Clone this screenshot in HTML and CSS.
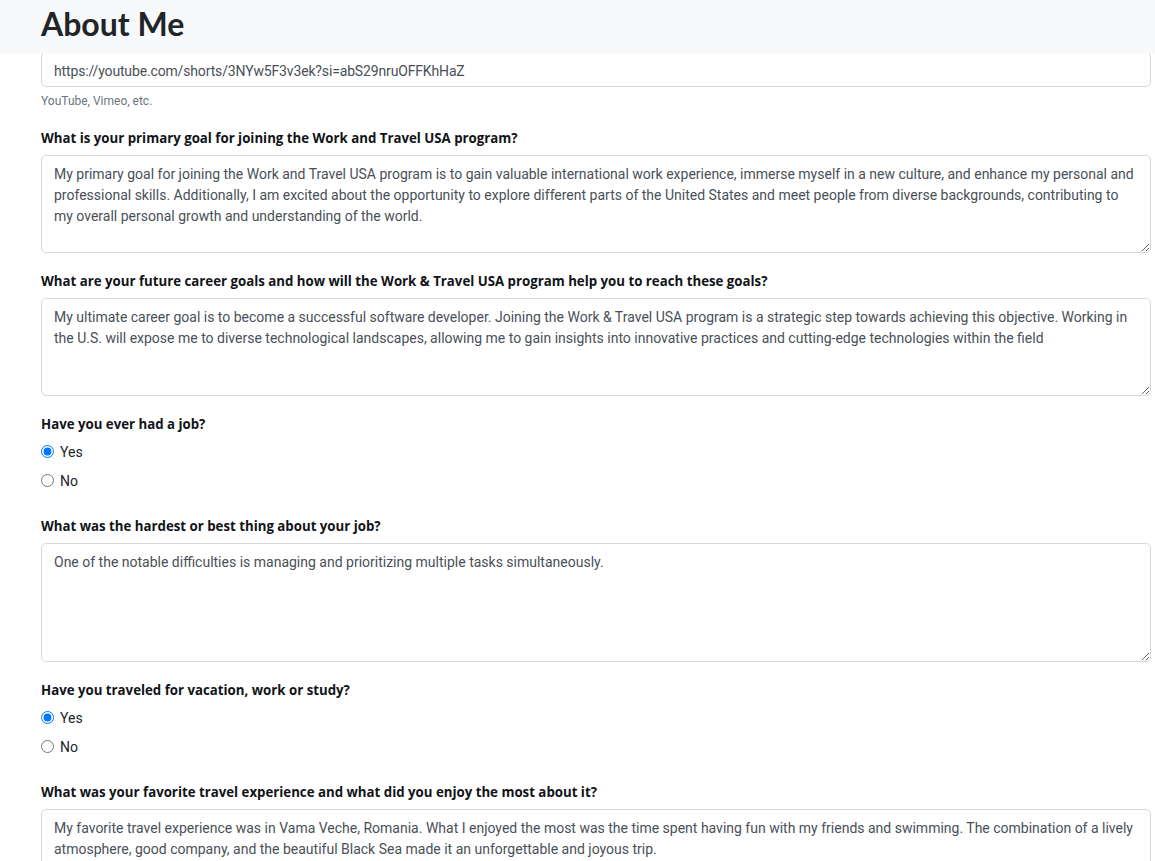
FILE: index.html
```html
<!DOCTYPE html>
<html lang="en">
<head>
<meta charset="utf-8">
<title>About Me</title>
<link rel="stylesheet" href="styles.css">
</head>
<body>
<header class="page-header">
  <h1 class="page-title">About Me</h1>
</header>
<main class="form-wrap">
  <div class="group">
    <input class="control control-url" type="text" value="https://youtube.com/shorts/3NYw5F3v3ek?si=abS29nruOFFKhHaZ">
    <div class="help">YouTube, Vimeo, etc.</div>
  </div>

  <div class="group">
    <label class="q-label">What is your primary goal for joining the Work and Travel USA program?</label>
    <textarea class="control area area-4">My primary goal for joining the Work and Travel USA program is to gain valuable international work experience, immerse myself in a new culture, and enhance my personal and
professional skills. Additionally, I am excited about the opportunity to explore different parts of the United States and meet people from diverse backgrounds, contributing to
my overall personal growth and understanding of the world.</textarea>
  </div>

  <div class="group">
    <label class="q-label">What are your future career goals and how will the Work &amp; Travel USA program help you to reach these goals?</label>
    <textarea class="control area area-4">My ultimate career goal is to become a successful software developer. Joining the Work &amp; Travel USA program is a strategic step towards achieving this objective. Working in
the U.S. will expose me to diverse technological landscapes, allowing me to gain insights into innovative practices and cutting-edge technologies within the field</textarea>
  </div>

  <div class="group">
    <div class="q-label">Have you ever had a job?</div>
    <label class="check"><input type="radio" name="job" checked><span>Yes</span></label>
    <label class="check"><input type="radio" name="job"><span>No</span></label>
  </div>

  <div class="group">
    <label class="q-label">What was the hardest or best thing about your job?</label>
    <textarea class="control area area-5">One of the notable difficulties is managing and prioritizing multiple tasks simultaneously.</textarea>
  </div>

  <div class="group">
    <div class="q-label">Have you traveled for vacation, work or study?</div>
    <label class="check"><input type="radio" name="travel" checked><span>Yes</span></label>
    <label class="check"><input type="radio" name="travel"><span>No</span></label>
  </div>

  <div class="group">
    <label class="q-label">What was your favorite travel experience and what did you enjoy the most about it?</label>
    <textarea class="control area area-4">My favorite travel experience was in Vama Veche, Romania. What I enjoyed the most was the time spent having fun with my friends and swimming. The combination of a lively
atmosphere, good company, and the beautiful Black Sea made it an unforgettable and joyous trip.</textarea>
  </div>
</main>
</body>
</html>
```
FILE: styles.css
```css
html, body {
  margin: 0;
  padding: 0;
  background: #fff;
}

body {
  font-family: Roboto, "Liberation Sans", sans-serif;
  font-size: 14px;
  line-height: 21px;
  color: #212529;
}

.page-header {
  position: fixed;
  top: 0;
  left: 0;
  right: 0;
  height: 54px;
  box-sizing: border-box;
  padding: 5px 41px 0;
  background: #f8f9fa;
  z-index: 10;
}

.page-title {
  margin: 0;
  font-family: Lato, "Open Sans", sans-serif;
  font-weight: 700;
  font-size: 32px;
  line-height: 1.2;
  color: #212529;
}

.form-wrap {
  padding: 52px 4px 40px 41px;
}

.group {
  display: flex;
  flex-direction: column;
  align-items: flex-start;
  margin-bottom: 16px;
}

.control {
  display: block;
  width: 100%;
  box-sizing: border-box;
  margin: 0;
  padding: 7.5px 12px 4.5px;
  border: 1px solid #d5d8dc;
  border-radius: 5px;
  background: #fff;
  color: #495057;
  font-family: Roboto, "Liberation Sans", sans-serif;
  font-size: 14px;
  line-height: 21px;
  outline: none;
}

.control-url {
  height: 35px;
  letter-spacing: -0.15px;
}

.help {
  margin-top: 6px;
  font-size: 12px;
  line-height: 17px;
  color: #6c757d;
}

.q-label {
  display: block;
  box-sizing: border-box;
  height: 23px;
  padding-top: 2px;
  margin-bottom: 6px;
  font-family: "Open Sans", "Noto Sans", sans-serif;
  font-weight: 700;
  font-size: 13.25px;
  line-height: 21px;
  color: #111418;
}

.area {
  resize: vertical;
  overflow: hidden;
  white-space: pre-wrap;
}

.area-4 {
  height: 98px;
}

.area-5 {
  height: 119px;
}

.check {
  display: flex;
  align-items: center;
  gap: 6px;
  height: 21px;
  margin-bottom: 8px;
  color: #212529;
  font-size: 14px;
}

.check:last-child {
  margin-bottom: 7px;
}

.check span {
  padding-top: 2px;
}

.check input {
  margin: 0;
  width: 13px;
  height: 13px;
}
```
